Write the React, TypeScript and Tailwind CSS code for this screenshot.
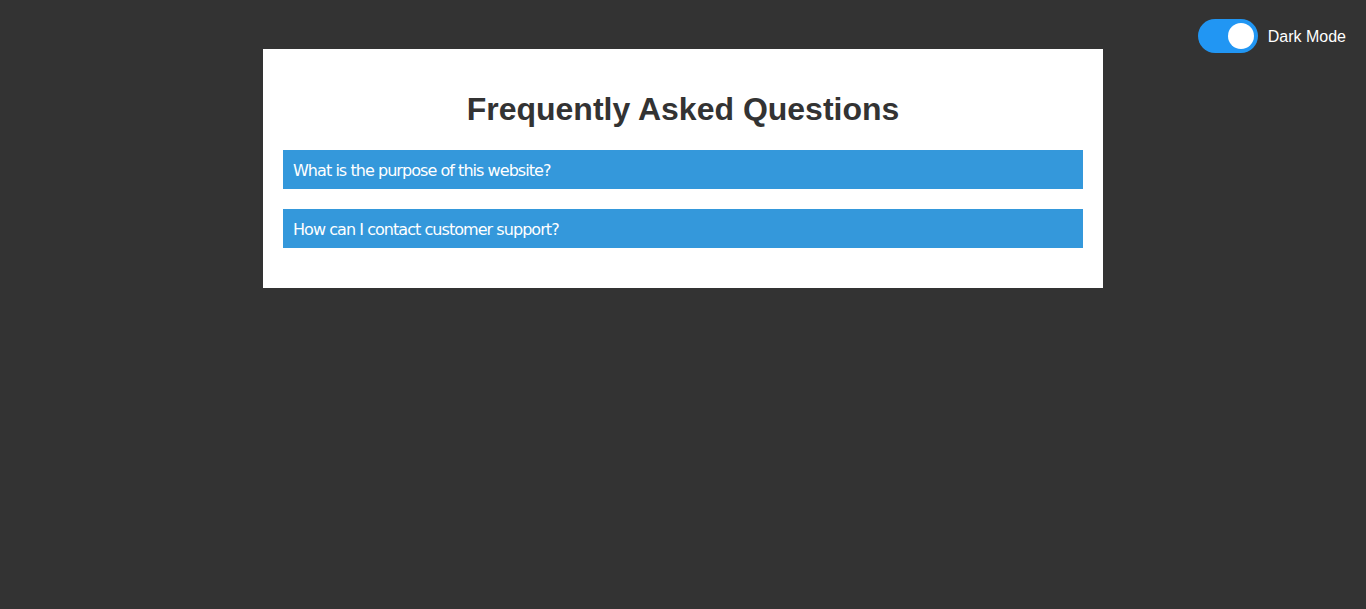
import React, { useState } from "react";

export default function App() {
  const [dark, setDark] = useState(true);
  const qs = [
    "What is the purpose of this website?",
    "How can I contact customer support?",
  ];
  return (
    <div className="min-h-[609px] w-full bg-[#333333] relative" style={{ fontFamily: "Arial, 'Liberation Sans', sans-serif" }}>
      <div className="absolute top-[19px] right-[20px] flex items-center gap-[10px]">
        <button
          onClick={() => setDark(!dark)}
          className="relative w-[60px] h-[34px] rounded-full bg-[#2196f3]"
        >
          <span className="absolute top-[4px] right-[4px] w-[26px] h-[26px] rounded-full bg-white" />
        </button>
        <span className="text-white text-[16px] pt-[2px] font-['Liberation_Sans',Arial,sans-serif]">Dark Mode</span>
      </div>
      <div className="pt-[49px] flex justify-center">
        <div className="w-[840px] bg-white px-[20px] pt-[42px] pb-[40px]">
          <h1 className="text-[32px] leading-[37px] font-bold text-[#333333] text-center mb-[22px] font-['Liberation_Sans',Arial,sans-serif]">
            Frequently Asked Questions
          </h1>
          <div className="flex flex-col gap-[20px]">
            {qs.map((q) => (
              <button
                key={q}
                className="w-full h-[39px] bg-[#3498db] text-white text-left px-[10px] pt-[2px] text-[16px] font-['DejaVu_Sans',Tahoma,sans-serif] tracking-[-0.95px]"
              >
                {q}
              </button>
            ))}
          </div>
        </div>
      </div>
    </div>
  );
}
